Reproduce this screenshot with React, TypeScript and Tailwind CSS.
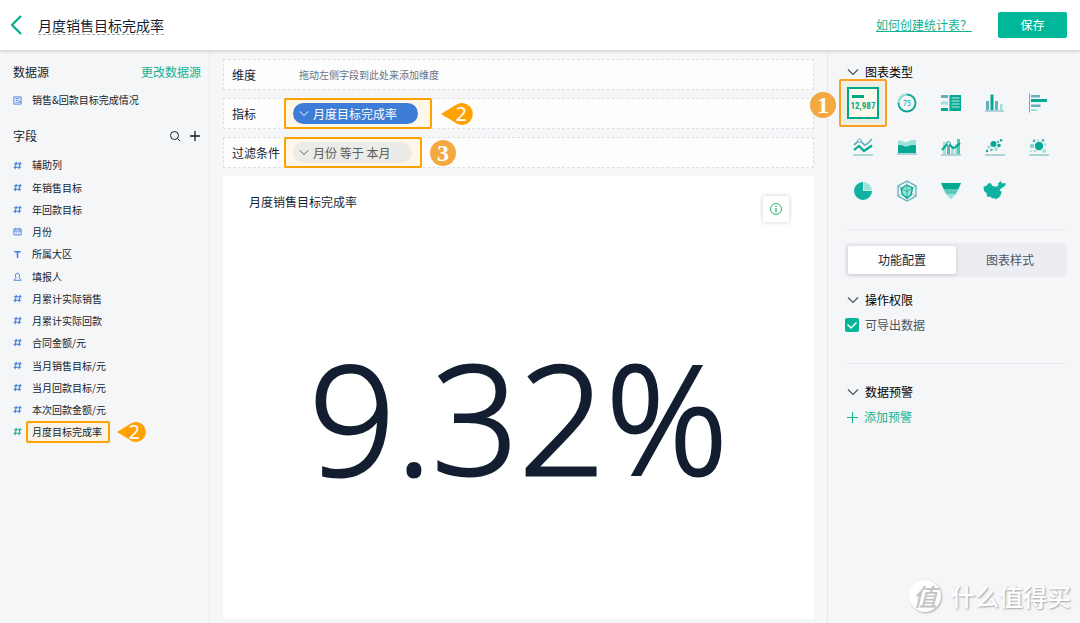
import React from 'react';

type FieldKind = 'number' | 'date' | 'text' | 'person' | 'table';

const fields: { name: string; kind: FieldKind; active?: boolean }[] = [
    { name: '辅助列', kind: 'number' },
    { name: '年销售目标', kind: 'number' },
    { name: '年回款目标', kind: 'number' },
    { name: '月份', kind: 'date' },
    { name: '所属大区', kind: 'text' },
    { name: '填报人', kind: 'person' },
    { name: '月累计实际销售', kind: 'number' },
    { name: '月累计实际回款', kind: 'number' },
    { name: '合同金额/元', kind: 'number' },
    { name: '当月销售目标/元', kind: 'number' },
    { name: '当月回款目标/元', kind: 'number' },
    { name: '本次回款金额/元', kind: 'number' },
    { name: '月度目标完成率', kind: 'number', active: true },
];

const kindPaths: Record<FieldKind, React.ReactNode> = {
    number: <path d="M3.700 1 2.300 9M8 1 6.600 9M1 3h8.500M.5 7H9" />,
    date: <path d="M1 2.200h8v6.600H1zM1 4.500h8M3 .8v2M7 .8v2M3 6.500h1.200M5.800 6.500H7" />,
    text: <path d="M1.500 2h7M5 2v7" strokeWidth="1.700" />,
    person: <path d="M.8 9.200h8.400M1.500 9c0-1.800 1.600-2 2-2.500C2.200 5.200 2.300 1.200 5 1.200S7.800 5.200 6.500 6.500c.4.500 2 .7 2 2.500" />,
    table: <path d="M1 1h8v8H1zM3 3h4M3 5h2M3 7h1.500M6 5.500v2M7.500 5v2.500" />,
};

const KindIcon = ({ kind, active }: { kind: FieldKind; active?: boolean }) => (
    <svg
        viewBox="0 0 10 10"
        className={`w-[9px] h-[9px] shrink-0 ${active ? 'text-[#17ab8d]' : 'text-[#3f7be0]'}`}
        fill="none"
        stroke="currentColor"
        strokeWidth={kind === 'number' ? '1.200' : '1'}
        aria-hidden="true"
    >
        {kindPaths[kind]}
    </svg>
);

const Chevron = ({ className }: { className: string }) => (
    <svg viewBox="0 0 12 8" className={className} fill="none" stroke="currentColor" strokeWidth="1.200" aria-hidden="true">
        <path d="M1 1.500 6 6.500l5-5" />
    </svg>
);

// Numbered pointer with its tip on the left
const Pointer = ({ className }: { className: string }) => (
    <span className={`relative flex items-center justify-end pr-[6px] ${className}`}>
        <svg viewBox="0 0 32 22" className="absolute inset-0 h-full w-full" aria-hidden="true">
            <path d="M0 11 13.500 2.800A11 11 0 1 1 13.500 19.200Z" fill="#ffa200" />
        </svg>
        <span className="relative font-['Noto_Sans',sans-serif] text-xl leading-5 text-white">2</span>
    </span>
);

const Badge = ({ children }: { children: string }) => (
    <span className="flex w-[26px] h-[26px] items-center justify-center rounded-full bg-[#f4a940] font-['Liberation_Serif',serif] text-2xl leading-none font-bold text-white">
        {children}
    </span>
);

const D = '#05a892';
const S = '#64b1bc';
const L = '#9be3da';

const chartTypes: { label: string; icon: React.ReactNode }[] = [
    {
        label: '进度图',
        icon: (
            <>
                <circle cx="11" cy="11" r="8.500" fill="none" stroke={D} strokeWidth="1.800" />
                <path d="M2.500 11A8.500 8.500 0 0 1 11 2.500" fill="none" stroke={L} strokeWidth="1.800" />
                <text x="11" y="13.500" textAnchor="middle" fontSize="7" fill={D}>75</text>
            </>
        ),
    },
    {
        label: '透视表',
        icon: (
            <>
                <path d="M1 3h7v3H1z" fill={S} />
                <path d="M1 9.500h7v3H1z" fill={L} />
                <path d="M1 16h7v3H1z" fill={D} />
                <path d="M9.500 3H21v16H9.500z" fill={D} />
                <path d="M11.500 6h8M11.500 9h8M11.500 12h8M11.500 15h8" stroke="#c5ede7" />
            </>
        ),
    },
    {
        label: '柱状图',
        icon: (
            <>
                <path d="M2 9h3v9H2zM11 9h3v9h-3z" fill={S} />
                <path d="M6.500 2.500h3V18h-3z" fill={D} />
                <path d="M16 12h2.500v6H16z" fill={L} />
                <path d="M1 19h19" stroke={S} />
            </>
        ),
    },
    {
        label: '条形图',
        icon: (
            <>
                <path d="M1.500 1.500v19" stroke={S} />
                <path d="M3 3h9v2.500H3zM3 12.500h9.500V15H3z" fill={S} />
                <path d="M3 7h16v3H3z" fill={D} />
                <path d="M3 17h6v2H3z" fill={L} />
            </>
        ),
    },
    {
        label: '折线图',
        icon: (
            <>
                <path d="m2 9 5.500-5 5 5 2.500-1 5-5" fill="none" stroke={S} strokeWidth="1.700" />
                <circle cx="7.500" cy="4.500" r="1.700" fill="#f4f6f8" stroke={S} />
                <path d="m2 14 5-4 5 5 8-5.500" fill="none" stroke={D} strokeWidth="2.200" />
                <path d="M1 19h20" stroke={S} />
            </>
        ),
    },
    {
        label: '面积图',
        icon: (
            <>
                <path d="M2 5c3-2 6 2 9 1s4-3 9-2v7H2z" fill={L} />
                <path d="M2 9.500c4-1.500 6 2 9 1s5-2 9-1V17H2z" fill={D} />
                <path d="M1 18h20" stroke={S} />
            </>
        ),
    },
    {
        label: '双轴图',
        icon: (
            <>
                <path d="M3 6h3v12H3zM11 12h3v6h-3zM15 8h2v10h-2z" fill={L} />
                <path d="M7 10h3v8H7z" fill={S} />
                <path d="M17 3h3v15h-3z" fill="#57c9b9" />
                <path d="m2 14 6-7 5 5 3-1 4-4" fill="none" stroke={D} strokeWidth="2" />
                <circle cx="8.500" cy="7.500" r="1.800" fill="#f4f6f8" stroke={D} />
                <path d="M1 19h20" stroke={S} />
            </>
        ),
    },
    {
        label: '散点图',
        icon: (
            <>
                <circle cx="9.500" cy="8" r="3" fill={D} />
                <circle cx="15" cy="9.500" r="1.800" fill={D} />
                <circle cx="17" cy="4.200" r="1.200" fill={D} />
                <circle cx="3" cy="15" r="1.200" fill={D} />
                <circle cx="14" cy="6" r="1.200" fill={S} />
                <circle cx="7.500" cy="14" r="1.300" fill={S} />
                <circle cx="5" cy="11" r="1.800" fill={L} />
                <circle cx="12" cy="13" r="2" fill={L} />
                <path d="M1 19h20" stroke={S} />
            </>
        ),
    },
    {
        label: '气泡图',
        icon: (
            <>
                <circle cx="11" cy="10" r="4.200" fill={D} />
                <circle cx="4" cy="10" r="2.200" fill="#7ed6ca" />
                <circle cx="6" cy="5" r="1.400" fill={S} />
                <circle cx="15" cy="4.500" r="1.400" fill={S} />
                <circle cx="10" cy="4" r="1" fill={L} />
                <circle cx="17" cy="8.500" r="1.200" fill={L} />
                <circle cx="16" cy="15" r="2" fill={L} />
                <circle cx="7" cy="15" r="1.200" fill={L} />
                <circle cx="3" cy="15" r="1" fill={L} />
                <path d="M1 19h20" stroke={S} />
            </>
        ),
    },
    {
        label: '饼图',
        icon: (
            <>
                <path d="M11 2A9 9 0 1 0 20 11h-9z" fill="#0fb2a2" />
                <path d="M11.500 2A9 9 0 0 1 20 10.500h-8.500z" fill={L} />
            </>
        ),
    },
    {
        label: '雷达图',
        icon: (
            <>
                <path d="m11 1 9 5v10l-9 5-9-5V6z" fill="none" stroke={S} strokeWidth="1.300" />
                <path d="M11 1v20M2 6l18 10M20 6 2 16" stroke={S} strokeWidth=".7" />
                <path d="m11 5 5.500 3-1.500 7-4 3-4.500-3.500L5 8.500z" fill={L} stroke={D} strokeWidth="1.400" />
                <path d="M11 5v13M5 8.500l6 3 5.500-3.500" fill="none" stroke={D} strokeWidth=".8" />
            </>
        ),
    },
    {
        label: '漏斗图',
        icon: (
            <>
                <path d="M1 3h20l-2.500 6h-15z" fill={D} />
                <path d="M3.500 9h15L16 14H6z" fill="#5cc9bb" />
                <path d="M6 14h10l-5 5.500z" fill={L} />
            </>
        ),
    },
    {
        label: '地图',
        icon: (
            <path
                d="m-.5 7 3-1.500L5 3l2 .5L8.500 6l4 .7 2-1.700-.5-1.500 3-2.500 1 2.500 3.500-.5v2.500L19.500 7 17 8.500l-1.500 2 2 1-.5 3-2 3-2 1-1 1-2-1.500-2 .5-1.500-2-3 .5L3 15.500l-.5-2.500L0 11z"
                fill="#0fb2a2"
            />
        ),
    },
];

const DropRow = ({ label, children }: { label: string; children: React.ReactNode }) => (
    <div className="flex h-[31px] items-center border border-dashed border-[#dcdfe3] bg-[#fdfdfe] pl-2">
        <span className="w-[52px] shrink-0">{label}</span>
        {children}
    </div>
);

const SectionTitle = ({ children }: { children: string }) => (
    <button type="button" className="flex h-5 items-center gap-[6px] pl-[6px] text-black">
        <Chevron className="w-3 h-2 text-gray-600" />
        {children}
    </button>
);

export default function App() {
    return (
        <div className="relative flex h-screen flex-col overflow-hidden bg-[#f4f6f8] font-['Noto_Sans_CJK_SC',sans-serif] text-xs text-[#141e31]">
            {/* Header */}
            <header className="relative z-10 flex h-[50px] shrink-0 items-center bg-white pr-[13px] pl-[11px] shadow-[0_1px_4px_rgba(0,0,0,0.2)]">
                <button type="button" aria-label="返回" className="mr-4 text-[#00aa8d]">
                    <svg viewBox="0 0 11 20" className="h-5 w-[11px]" fill="none" stroke="currentColor" strokeWidth="2.200">
                        <path d="m10 1-9 9 9 9" />
                    </svg>
                </button>
                <h1 className="border-b border-dashed border-gray-400 text-sm leading-[18px]">月度销售目标完成率</h1>
                <a href="#help" className="mr-[26px] ml-auto text-[#13b392] underline">如何创建统计表？</a>
                <button type="button" className="h-[26px] w-[69px] rounded-xs bg-[#00b899] text-white">保存</button>
            </header>

            <div className="flex min-h-0 flex-1">
                {/* Fields */}
                <aside className="w-[210px] shrink-0 border-r border-[#e9ebee] pt-3 pr-2 pl-[13px]">
                    <div className="flex h-5 items-center justify-between">
                        <h2>数据源</h2>
                        <button type="button" className="text-[#13b392]">更改数据源</button>
                    </div>
                    <div className="mt-2 flex h-5 items-center gap-[10px] text-[10px]">
                        <KindIcon kind="table" />
                        销售&amp;回款目标完成情况
                    </div>
                    <div className="mt-4 flex h-5 items-center">
                        <h2>字段</h2>
                        <button type="button" aria-label="搜索" className="mr-2 ml-auto">
                            <svg viewBox="0 0 12 12" className="h-3 w-3" fill="none" stroke="currentColor">
                                <circle cx="5.500" cy="5.500" r="4" />
                                <path d="m8.500 8.500 2.500 2.500" />
                            </svg>
                        </button>
                        <button type="button" aria-label="添加字段">
                            <svg viewBox="0 0 12 12" className="h-3 w-3" stroke="currentColor" strokeWidth="1.300">
                                <path d="M6 1v10M1 6h10" />
                            </svg>
                        </button>
                    </div>
                    <ul className="mt-2 grid h-[289px] auto-rows-fr text-[10px]">
                        {fields.map((field) => (
                            <li key={field.name} className="flex items-center gap-1">
                                <KindIcon kind={field.kind} active={field.active} />
                                <span
                                    className={`flex h-[22px] items-center rounded-xs border-2 pr-[6px] pl-1 ${
                                        field.active ? 'border-[#ffa200] bg-[#faf3e6]' : 'border-transparent'
                                    }`}
                                >
                                    {field.name}
                                </span>
                                {field.active && <Pointer className="ml-[3px] h-[20px] w-[29px]" />}
                            </li>
                        ))}
                    </ul>
                </aside>

                {/* Canvas */}
                <main className="flex min-w-0 flex-1 flex-col gap-2 px-[13px] pt-[9px] pb-1">
                    <DropRow label="维度">
                        <span className="pl-[15px] text-[10px] text-gray-500">拖动左侧字段到此处来添加维度</span>
                    </DropRow>
                    <DropRow label="指标">
                        <div className="-my-px flex h-[31px] items-center rounded-xs border-2 border-[#ffa200] bg-[#fff7e8] pr-3 pl-[7px]">
                            <button type="button" className="flex h-[21px] w-[125px] items-center gap-1 rounded-full bg-[#3d7dd8] pl-[6px] text-white">
                                <Chevron className="h-[7px] w-[10px]" />
                                月度目标完成率
                            </button>
                        </div>
                        <Pointer className="ml-[9px] h-[22px] w-[32px]" />
                    </DropRow>
                    <DropRow label="过滤条件">
                        <div className="-my-px flex h-[31px] items-center rounded-xs border-2 border-[#ffa200] bg-[#fff7e8] pr-2 pl-[7px]">
                            <button type="button" className="flex h-[21px] w-[119px] items-center gap-1 rounded-full bg-[#ebebe8] pl-[6px] text-[#5c5c58]">
                                <Chevron className="h-[7px] w-[10px]" />
                                月份 等于 本月
                            </button>
                        </div>
                        <div className="ml-2">
                            <Badge>3</Badge>
                        </div>
                    </DropRow>

                    <section className="flex min-h-0 flex-1 flex-col bg-white">
                        <div className="flex items-start justify-between pt-5 pr-[25px] pl-[26px]">
                            <h2 className="leading-3">月度销售目标完成率</h2>
                            <button
                                type="button"
                                aria-label="说明"
                                className="flex h-[26px] w-[26px] items-center justify-center rounded-xs bg-white text-[#30b565] shadow-[0_0_4px_rgba(60,60,90,0.25)]"
                            >
                                <svg viewBox="0 0 14 14" className="h-[14px] w-[14px]" fill="none" stroke="currentColor">
                                    <circle cx="7" cy="7" r="5.500" />
                                    <path d="M7 6v4.500M7 3.700v1.300" strokeWidth="1.300" />
                                </svg>
                            </button>
                        </div>
                        <div className="flex flex-1 items-center justify-center pb-2 font-['Open_Sans',sans-serif] text-[152px] leading-none font-light [-webkit-text-stroke:3px_#141e31]">
                            9.32%
                        </div>
                    </section>
                </main>

                {/* Chart settings */}
                <aside className="relative w-[253px] shrink-0 border-l border-[#e6e8eb] pt-3 pr-[13px] pl-[13px]">
                    <SectionTitle>图表类型</SectionTitle>
                    <div className="absolute top-[42px] -left-[18px]">
                        <Badge>1</Badge>
                    </div>
                    <div className="-mt-px grid grid-cols-[repeat(5,44px)] auto-rows-[44px]">
                        <button
                            type="button"
                            aria-label="指标卡"
                            className="-m-[2px] flex items-center justify-center rounded-xs border-2 border-[#f7a224] bg-[#f8efe2]"
                        >
                            <svg viewBox="0 0 32 32" className="h-8 w-8 ring-4 ring-[#e9efe4]">
                                <path d="M1 1h30v30H1z" fill="#fdf8ee" stroke="#00aa86" strokeWidth="2" />
                                <path d="M5 8h12v3H5z" fill="#00aa86" />
                                <text x="16" y="22" fontSize="9" fontWeight="700" fill="#00aa86" textAnchor="middle" fontFamily="'Liberation Sans Narrow', 'Roboto Condensed', 'Open Sans Condensed', Lato, sans-serif">12,987</text>
                            </svg>
                        </button>
                        {chartTypes.map((type) => (
                            <button key={type.label} type="button" aria-label={type.label} className="flex items-center justify-center">
                                <svg viewBox="0 0 22 22" className="h-[22px] w-[22px] overflow-visible" fontFamily="'Liberation Sans Narrow', Lato, sans-serif">
                                    {type.icon}
                                </svg>
                            </button>
                        ))}
                    </div>

                    <div className="ml-1">
                        <hr className="mt-4 border-[#e8eaed]" />
                        <div className="mt-[13px] grid h-[34px] grid-cols-2 rounded-sm bg-[#ecedf2] p-[3px]">
                            <button type="button" className="rounded-xs bg-white shadow-[0_1px_4px_rgba(0,0,0,0.15)]">功能配置</button>
                            <button type="button" className="text-gray-600">图表样式</button>
                        </div>
                    </div>

                    <div className="mt-[13px]">
                        <SectionTitle>操作权限</SectionTitle>
                        <label className="mt-[5px] ml-1 flex h-5 items-center gap-[6px] text-gray-600">
                            <span className="relative flex">
                                <input type="checkbox" defaultChecked className="peer h-[14px] w-[14px] appearance-none rounded-xs bg-gray-300 checked:bg-[#00b899]" />
                                <svg viewBox="0 0 14 14" className="pointer-events-none absolute inset-0 hidden peer-checked:block" fill="none" stroke="#fff" strokeWidth="1.500">
                                    <path d="m2.500 6.500 3.500 3.500 5.500-5.500" />
                                </svg>
                            </span>
                            可导出数据
                        </label>
                    </div>

                    <hr className="mt-7 ml-1 border-[#e8eaed]" />
                    <div className="mt-[18px]">
                        <SectionTitle>数据预警</SectionTitle>
                        <button type="button" className="mt-[5px] flex h-5 items-center gap-[6px] pl-[6px] text-[#13b392]">
                            <svg viewBox="0 0 12 12" className="h-[11px] w-[11px]" stroke="currentColor" strokeWidth="1.200">
                                <path d="M6 0v12M0 6h12" />
                            </svg>
                            添加预警
                        </button>
                    </div>
                </aside>
            </div>

            {/* Watermark */}
            <div className="pointer-events-none absolute right-[9px] bottom-[11px] z-20 flex items-center gap-[10px] text-2xl leading-8 text-white">
                <span className="flex h-8 w-8 items-center justify-center rounded-full bg-white font-medium text-[#c3c4c6] italic shadow-[1px_1px_2px_rgba(0,0,0,0.3)]">
                    值
                </span>
                <span className="font-medium [text-shadow:1px_1px_2px_rgba(0,0,0,0.35)]">什么值得买</span>
            </div>
        </div>
    );
}
